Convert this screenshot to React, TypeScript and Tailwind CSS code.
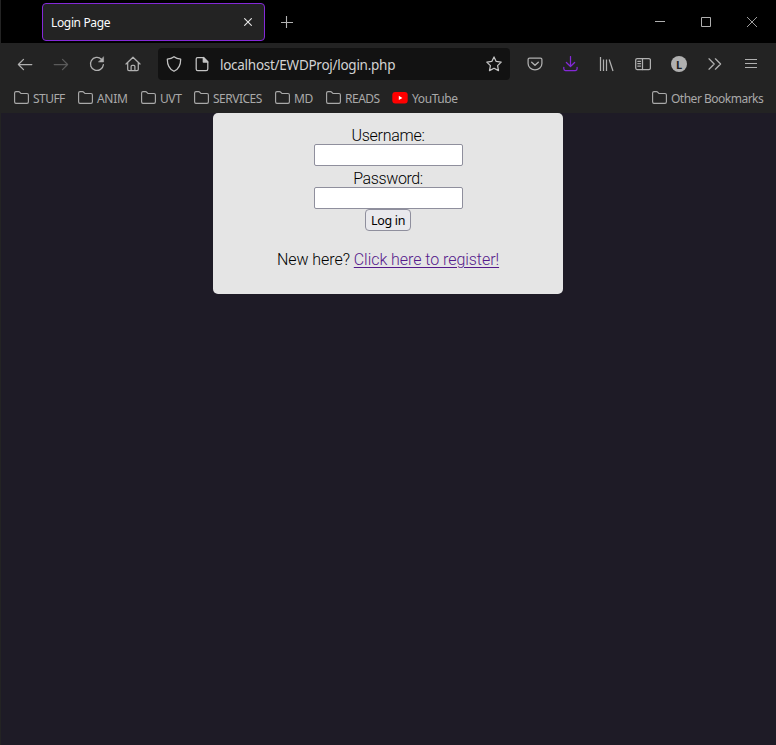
import React from "react";

type IconProps = { children: React.ReactNode; className?: string };

function Icon({ children, className = "" }: IconProps) {
  return (
    <svg
      viewBox="0 0 16 16"
      className={`h-4 w-4 shrink-0 ${className}`}
      fill="none"
      stroke="currentColor"
      strokeWidth="1.25"
      strokeLinecap="round"
      strokeLinejoin="round"
    >
      {children}
    </svg>
  );
}

function ToolButton({ children, className = "" }: IconProps) {
  return <button className={`flex h-8 w-9 shrink-0 items-center justify-center ${className}`}>{children}</button>;
}

function Folder() {
  return (
    <svg viewBox="0 0 15 13" className="mb-[2px] h-[13px] w-[15px] shrink-0" fill="none" stroke="currentColor" strokeWidth="1.15">
      <path d="M.6 10.7V2Q.6.6 2 .6h2.6q.5 0 .9.4l1.1 1.1q.4.4.9.4H13q1.4 0 1.4 1.4v6.8q0 1.7-1.4 1.7H2Q.6 12.4.6 10.7Z" />
    </svg>
  );
}

const bookmarks = [
  { label: "STUFF", width: "w-[32px]", tracking: "tracking-[-0.55px]" },
  { label: "ANIM", width: "w-[31px]", tracking: "tracking-[-0.3px]" },
  { label: "UVT", width: "w-[21px]", tracking: "tracking-[-0.4px]" },
  { label: "SERVICES", width: "w-[49px]", tracking: "tracking-[-0.5px]" },
  { label: "MD", width: "w-[19px]", tracking: "tracking-[-0.4px]" },
  { label: "READS", width: "w-[35px]", tracking: "tracking-[-0.5px]" },
];

function TitleBar() {
  return (
    <div className="flex h-[43px] bg-black pl-[41px] pt-[3px]">
      <div className="flex h-[38px] w-[223px] items-center justify-between rounded-[4px] border border-[#8429d8] bg-[#232323] pl-2 pr-3 text-[12px] text-[#fbfbfe]">
        <span className="mt-[2px] whitespace-nowrap tracking-[-0.35px]">Login Page</span>
        <svg viewBox="0 0 8 8" className="h-2 w-2" fill="none" stroke="#e8e8e8" strokeWidth="1.1">
          <path d="m.3.3 7.4 7.4M7.7.3.3 7.7" />
        </svg>
      </div>
      <button className="ml-4 mt-[13px] h-3 w-3 text-[#b3b3b3]">
        <svg viewBox="0 0 12 12" className="h-3 w-3" stroke="currentColor" strokeWidth="1.1">
          <path d="M5.5 0v12M0 6.5h12" />
        </svg>
      </button>
      <div className="ml-auto mr-[19px] mt-[13px] flex h-3 gap-9 text-[#b0b0b0]">
        <svg viewBox="0 0 10 12" className="h-3 w-[10px]" stroke="currentColor">
          <path d="M0 5.5h10" />
        </svg>
        <svg viewBox="0 0 10 12" className="h-3 w-[10px]" fill="none" stroke="currentColor">
          <path d="M.5 1.5h9v9h-9z" />
        </svg>
        <svg viewBox="0 0 10 12" className="h-3 w-[10px]" stroke="currentColor" strokeWidth=".9">
          <path d="m0 1 10 10M10 1 0 11" />
        </svg>
      </div>
    </div>
  );
}

function NavigationBar() {
  return (
    <div className="flex h-[42px] items-center pl-[6px] text-[#b0b0b0]">
      <ToolButton>
        <Icon><path d="M14.8 8.5H1.4M6.5 3.4 1.4 8.5 6.5 13.6" /></Icon>
      </ToolButton>
      <ToolButton className="text-[#5b5b5b]">
        <Icon><path d="M1.2 8.5h13.4M9.5 3.4 14.6 8.5 9.5 13.6" /></Icon>
      </ToolButton>
      <ToolButton>
        <Icon>
          <path d="M12.4 3.2A6.5 6.5 0 1 0 14.4 8.6" />
          <path d="M14.6 1v5H9.7Z" fill="currentColor" strokeWidth=".5" />
        </Icon>
      </ToolButton>
      <ToolButton>
        <Icon className="mr-px">
          <path d="M1 8 8 1.2 15 8M2.7 6.7v6.6q0 1.3 1.3 1.3h8q1.3 0 1.3-1.3V6.7M6.1 14.5v-4q0-1.2 1-1.2h1.8q1 0 1 1.2v4" />
        </Icon>
      </ToolButton>
      <div className="ml-[7px] flex h-8 w-[352px] shrink-0 items-center rounded-[4px] bg-[#121212] px-2">
        <Icon className="mb-px text-[#c4c4c4]">
          <path d="M8 .7c1.7 1.3 4.3 2.2 6.7 2.5 0 5.8-1.7 9.8-6.7 12.1-5-2.3-6.7-6.3-6.7-12.1C3.7 2.9 6.3 2 8 .7Z" />
        </Icon>
        <Icon className="ml-3 text-[#c4c4c4]">
          <path d="M3.5 1.5h6l4.3 4.3v7.2q0 1.7-1.7 1.7H3.7Q2.2 14.7 2.2 13V3q0-1.5 1.3-1.5Z" />
          <path d="M9.3 1.5v4.6h4.5Z" fill="currentColor" />
        </Icon>
        <span className="ml-[10px] mt-[3px] whitespace-nowrap text-[13.5px] tracking-[-0.27px] text-[#d3d3d3]">localhost/EWDProj/login.php</span>
        <Icon className="ml-auto text-[#c4c4c4]">
          <path d="m8 .9 2.2 4.5 5 .7-3.6 3.5.9 5L8 12.2l-4.5 2.4.9-5L.8 6.1l5-.7Z" />
        </Icon>
      </div>
      <div className="ml-[7px] flex">
        <ToolButton>
          <Icon>
            <path d="M2.5 2.2h11q1.4 0 1.4 1.4v3.8a6.9 6.5 0 0 1-13.8 0V3.6q0-1.4 1.4-1.4Z" />
            <path d="m4.7 6.3 3.3 3 3.3-3" strokeWidth="1.4" />
          </Icon>
        </ToolButton>
        <ToolButton className="text-[#8429d8]">
          <Icon><path d="M7.5.6v9.8M3.4 6.5l4.1 4 4.1-4M.8 11.3v1.5q0 1.7 1.7 1.7h9.9q1.700 0 1.700-1.700v-1.500" /></Icon>
        </ToolButton>
        <ToolButton>
          <Icon><path d="M1.5 1v14M4.5 3.500V15M7.500 3.500V15M10.200 3.500 14 15" strokeLinecap="butt" /></Icon>
        </ToolButton>
        <ToolButton>
          <Icon>
            <rect x=".7" y="2.5" width="14.7" height="11" rx="1.5" />
            <path d="M7.5 2.5v11M2.8 5.3h2.7M2.8 7.7h2.7M2.8 10.1h2.7" />
          </Icon>
        </ToolButton>
        <ToolButton>
          <span className="flex h-4 w-4 items-center justify-center rounded-full bg-[#b0b0b0] text-[11px] font-bold leading-none text-[#202020]">L</span>
        </ToolButton>
        <ToolButton>
          <Icon><path d="M2 2.8 7.2 8 2 13.2M8.4 2.8 13.6 8l-5.2 5.2" /></Icon>
        </ToolButton>
        <ToolButton>
          <Icon><path d="M2 3.5h12M2 7.5h12M2 11.5h12" strokeWidth="1" strokeLinecap="butt" /></Icon>
        </ToolButton>
      </div>
    </div>
  );
}

function BookmarksBar() {
  return (
    <div className="flex h-7 items-center gap-[13px] pb-px pl-[13px] pr-[12px] text-[12px] text-[#a9a9a9]">
      {bookmarks.map(({ label, width, tracking }) => (
        <div key={label} className="flex shrink-0 items-center gap-1">
          <Folder />
          <span className={`mt-px whitespace-nowrap ${width} ${tracking}`}>{label}</span>
        </div>
      ))}
      <div className="-ml-px flex items-center gap-1">
        <svg viewBox="0 0 16 12" className="mb-px h-3 w-4">
          <rect x=".3" width="15.4" height="11.5" rx="3" fill="#ff0000" />
          <path d="m6.8 3.7 3.6 2.2-3.6 2.2Z" fill="white" />
        </svg>
        <span className="mt-px whitespace-nowrap tracking-[-0.4px]">YouTube</span>
      </div>
      <div className="ml-auto flex items-center gap-1">
        <Folder />
        <span className="mt-px w-[93px] whitespace-nowrap tracking-[-0.5px]">Other Bookmarks</span>
      </div>
    </div>
  );
}

function LoginCard() {
  return (
    <form className="mx-auto flex h-[181px] w-[350px] flex-col items-center rounded-[5px] bg-[#e5e5e5] pt-3 font-['Roboto',sans-serif] text-[16px] font-light leading-[19px] text-black">
      <label htmlFor="username" className="relative top-px tracking-[-0.25px]">Username:</label>
      <input id="username" className="h-[22px] w-[149px] rounded-[2px] border border-[#8f8f9d] bg-white outline-none" />
      <label htmlFor="password" className="relative top-px mt-[2px] tracking-[-0.4px]">Password:</label>
      <input id="password" type="password" className="h-[22px] w-[149px] rounded-[2px] border border-[#8f8f9d] bg-white outline-none" />
      <button type="button" className="h-[22px] w-[46px] whitespace-nowrap rounded-[4px] border border-[#8f8f9d] bg-[#e9e9ed] pt-px font-['Noto_Sans',sans-serif] text-[12.5px] font-normal leading-5 tracking-[-0.3px] text-black">
        Log in
      </button>
      <p className="mt-[19px] whitespace-nowrap tracking-[-0.05px]">
        New here? <a className="text-[#551a8b] underline decoration-1 underline-offset-2">Click here to register!</a>
      </p>
    </form>
  );
}

export default function App() {
  return (
    <div className="h-[745px] w-[776px] overflow-hidden border-l border-[#232323] bg-[#1e1b26] font-['Noto_Sans',sans-serif]">
      <div className="bg-[#232323]">
        <TitleBar />
        <NavigationBar />
        <BookmarksBar />
      </div>
      <main className="pr-px">
        <LoginCard />
      </main>
    </div>
  );
}
